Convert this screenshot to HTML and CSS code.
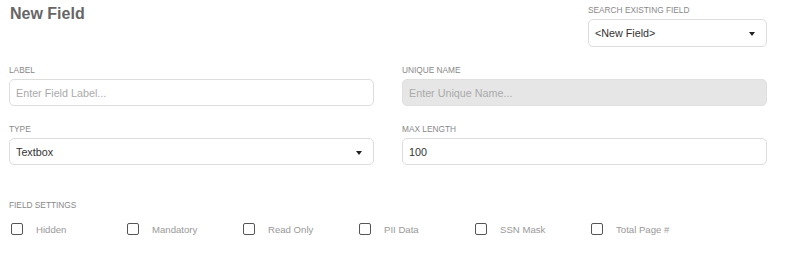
FILE: index.html
```html
<!DOCTYPE html>
<html lang="en">
<head>
    <meta charset="UTF-8">
    <meta name="viewport" content="width=device-width, initial-scale=1.0">
    <title>New Field</title>
    <link rel="stylesheet" href="styles.css">
</head>
<body>
    <div class="form">
        <div class="form-header">
            <h1>New Field</h1>
            <div class="search-group">
                <label class="field-label">Search Existing Field</label>
                <div class="select-wrap">
                    <select class="control">
                        <option>&lt;New Field&gt;</option>
                    </select>
                </div>
            </div>
        </div>

        <div class="grid">
            <div class="field">
                <label class="field-label">Label</label>
                <input class="control" type="text" placeholder="Enter Field Label...">
            </div>
            <div class="field">
                <label class="field-label">Unique Name</label>
                <input class="control" type="text" placeholder="Enter Unique Name..." disabled>
            </div>
            <div class="field">
                <label class="field-label">Type</label>
                <div class="select-wrap">
                    <select class="control">
                        <option>Textbox</option>
                    </select>
                </div>
            </div>
            <div class="field">
                <label class="field-label">Max Length</label>
                <input class="control" type="text" value="100">
            </div>
        </div>

        <div class="settings">
            <label class="field-label">Field Settings</label>
            <div class="checks">
                <label class="check"><input type="checkbox"><span>Hidden</span></label>
                <label class="check"><input type="checkbox"><span>Mandatory</span></label>
                <label class="check"><input type="checkbox"><span>Read Only</span></label>
                <label class="check"><input type="checkbox"><span>PII Data</span></label>
                <label class="check"><input type="checkbox"><span>SSN Mask</span></label>
                <label class="check"><input type="checkbox"><span>Total Page #</span></label>
            </div>
        </div>
    </div>
</body>
</html>
```

FILE: styles.css
```css
body {
    font-family: "Liberation Sans", Arial, sans-serif;
    margin: 0;
    background-color: #fff;
}

.form {
    width: 758px;
    padding: 5px 0 0 9px;
}

.form-header {
    display: flex;
    justify-content: space-between;
    align-items: flex-start;
}

h1 {
    margin: 0 0 0 1px;
    font-size: 16px;
    line-height: 18px;
    font-weight: bold;
    color: #666;
}

.search-group {
    width: 179px;
}

.field-label {
    display: block;
    font-size: 8.3px;
    line-height: 10px;
    text-transform: uppercase;
    color: #888;
    margin-bottom: 4px;
}

.control {
    display: block;
    box-sizing: border-box;
    width: 100%;
    height: 27px;
    padding: 0 6px;
    border: 1px solid #ddd;
    border-radius: 5px;
    background-color: #fff;
    font-family: "Liberation Sans", Arial, sans-serif;
    font-size: 10.75px;
    color: #333;
    outline: none;
}

.control::placeholder {
    color: #aaa;
}

.control:disabled {
    background-color: #e6e6e6;
    border-color: #e0e0e0;
}

select.control {
    appearance: none;
    -webkit-appearance: none;
}

.search-group .control {
    height: 28px;
}

.select-wrap {
    position: relative;
}

.select-wrap::after {
    content: "";
    position: absolute;
    right: 12px;
    top: 50%;
    margin-top: -1px;
    border-left: 3px solid transparent;
    border-right: 3px solid transparent;
    border-top: 4px solid #222;
}

.grid {
    display: grid;
    grid-template-columns: 365px 365px;
    column-gap: 28px;
    row-gap: 18px;
    margin-top: 18px;
}

.settings {
    margin-top: 35px;
}

.settings .field-label {
    margin-bottom: 13px;
}

.checks {
    display: flex;
}

.check {
    display: flex;
    align-items: center;
    width: 116px;
    font-size: 9.6px;
    color: #999;
}

.check input {
    appearance: none;
    -webkit-appearance: none;
    box-sizing: border-box;
    width: 12px;
    height: 12px;
    margin: 0 13px 0 2px;
    border: 1.5px solid #555;
    border-radius: 2px;
    background-color: #fff;
}
```
